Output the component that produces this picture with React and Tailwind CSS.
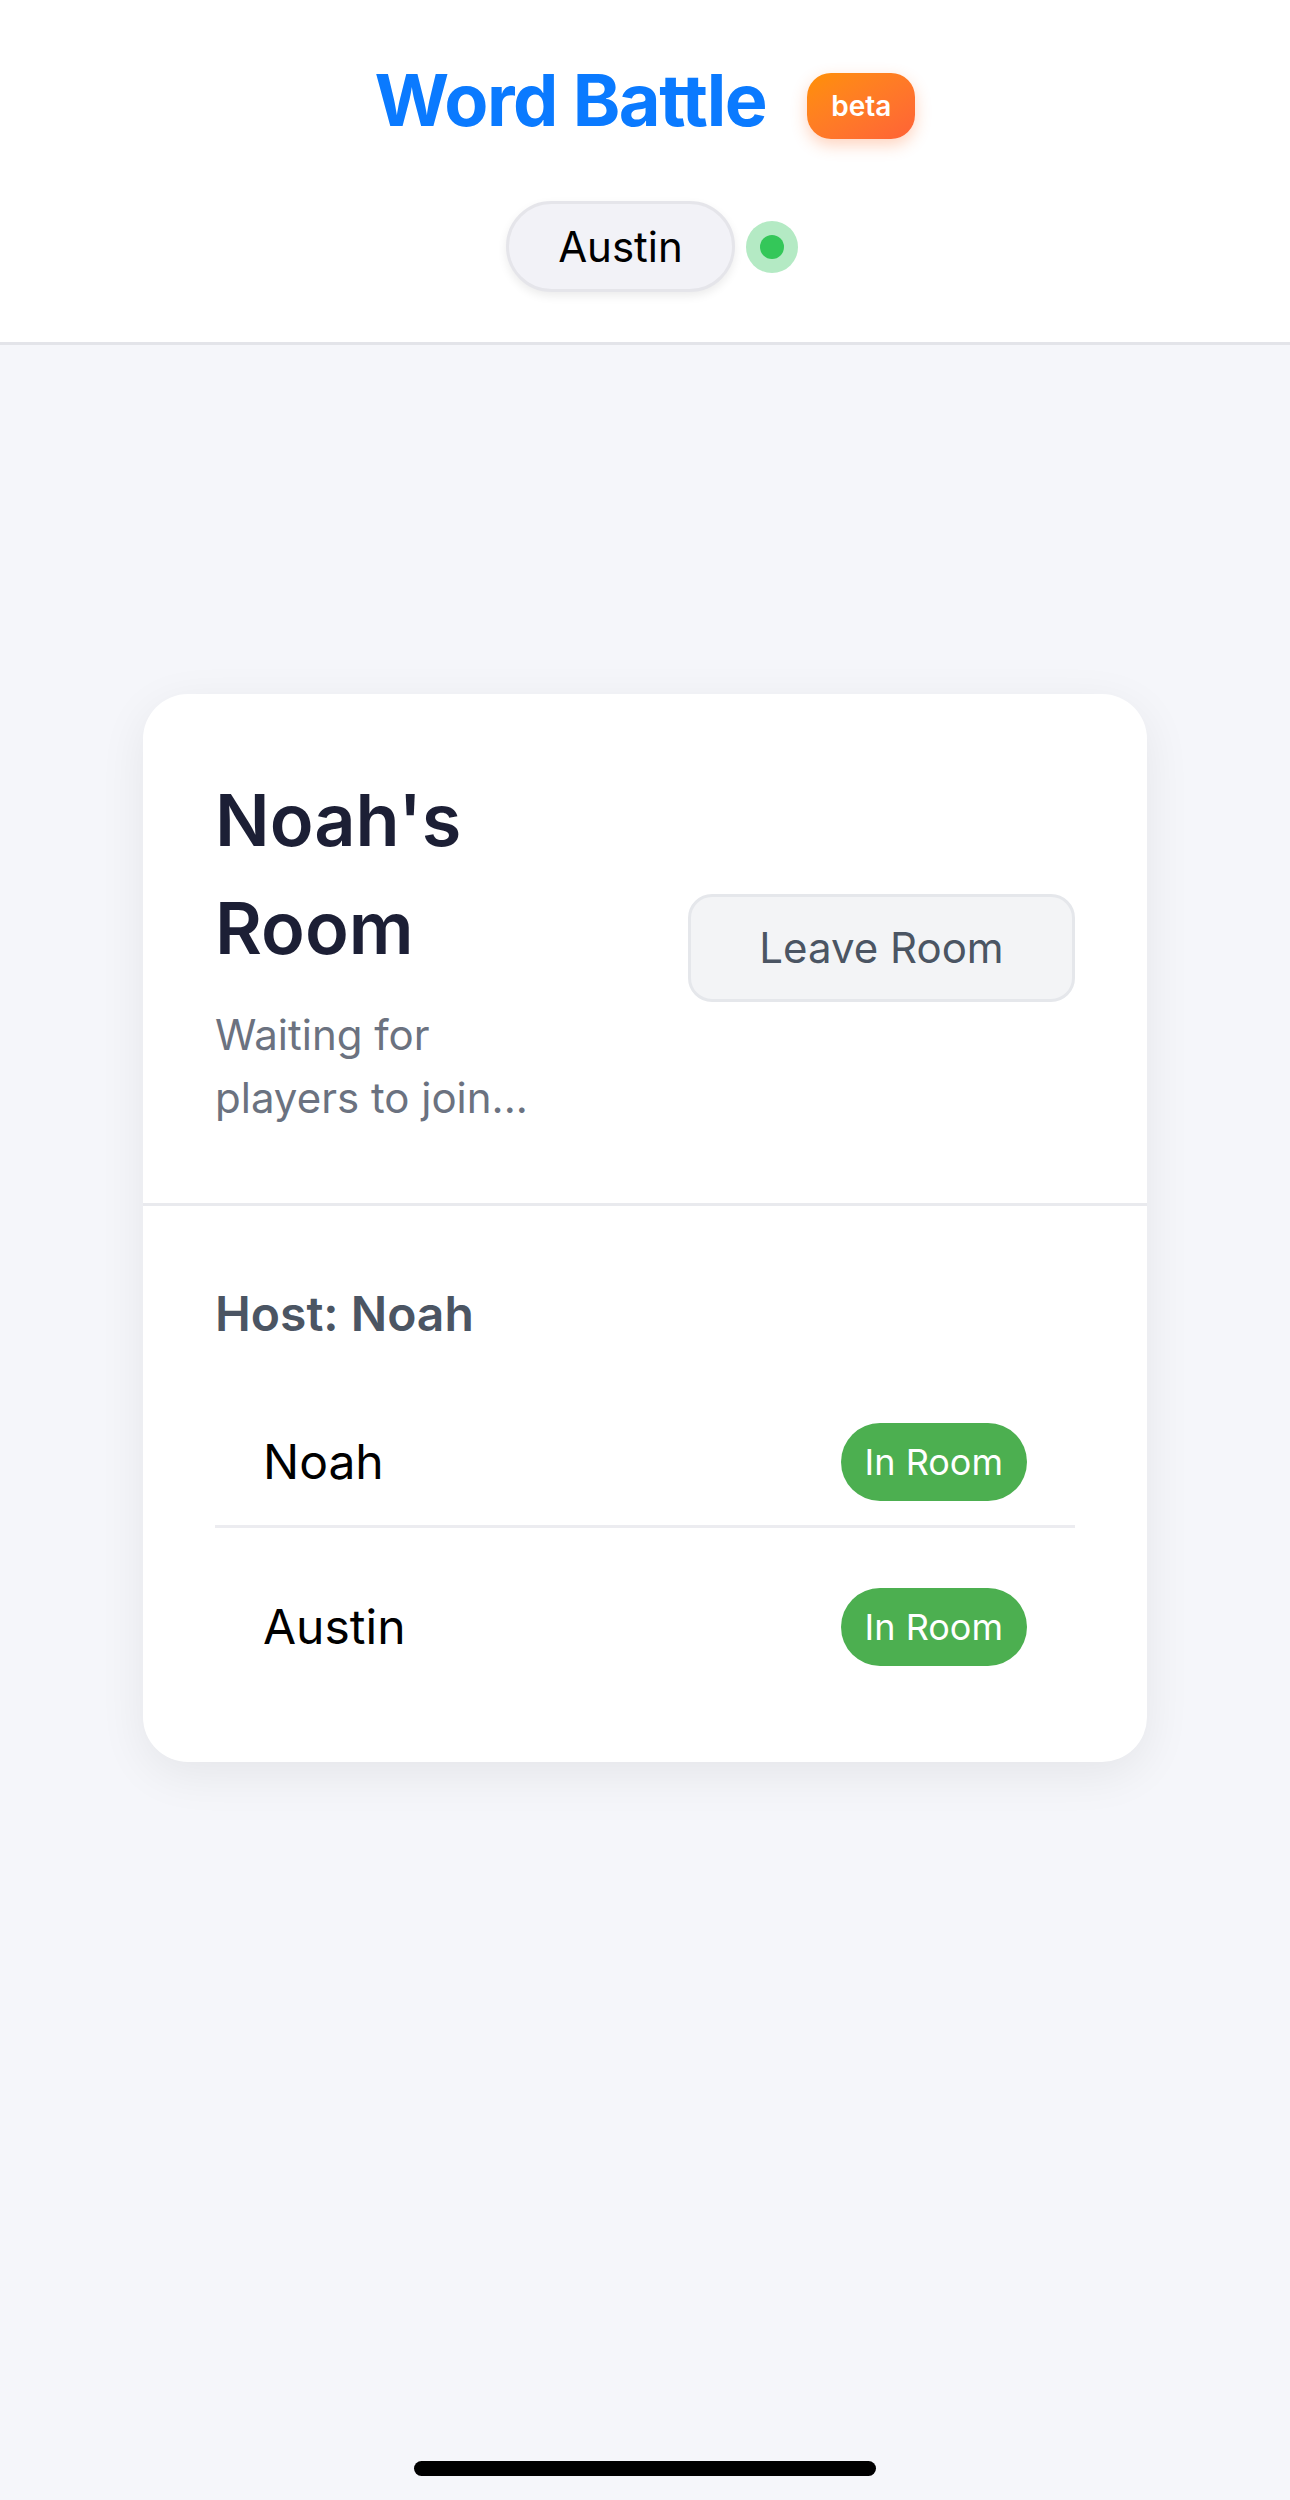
import React from 'react';

const players = ['Noah', 'Austin'];

const App = () => {
    return (
        <div
            className="h-[2500px] bg-[#f5f6fa] flex flex-col"
            style={{ fontFamily: 'Inter, "Noto Sans", sans-serif' }}
        >
            {/* Header */}
            <header className="bg-white border-b-[3px] border-[#e3e4e9] pt-[46px] pb-[50px] flex flex-col items-center">
                <div className="flex items-center gap-[41px]">
                    <h1 className="text-[72px] leading-[108px] font-bold tracking-[-0.02em] text-[#0a7aff]">
                        Word Battle
                    </h1>
                    <span className="mt-[12px] h-[66px] px-[24px] rounded-[24px] bg-linear-to-br from-[#ff9000] to-[#ff6236] text-white text-[28px] font-semibold flex items-center shadow-[0_6px_16px_rgba(255,110,40,0.3)]">
                        beta
                    </span>
                </div>
                <div className="mt-[47px] pl-[14px] flex items-center gap-[11px]">
                    <div className="h-[91px] px-[49px] rounded-full bg-[#f2f2f7] border-[3px] border-[#e5e5ea] text-[42px] text-black flex items-center shadow-[0_4px_10px_rgba(0,0,0,0.08)]">
                        Austin
                    </div>
                    <div className="w-[52px] h-[52px] rounded-full bg-[#b4eac4] flex items-center justify-center">
                        <div className="w-[24px] h-[24px] rounded-full bg-[#34c759]" />
                    </div>
                </div>
            </header>

            {/* Room card */}
            <main className="flex flex-col items-center pt-[349px]">
                <div className="w-[1004px] bg-white rounded-[45px] shadow-[0_12px_48px_rgba(0,0,0,0.07)] overflow-hidden">
                    <div className="px-[72px] pt-[72px] pb-[74px] flex items-center justify-between border-b-[3px] border-[#e9eaee]">
                        <div className="w-[330px]">
                            <h2 className="text-[72px] leading-[108px] font-semibold text-[#1c1f35]">Noah's Room</h2>
                            <p className="mt-[21px] text-[42px] leading-[63px] text-[#6b7280]">
                                Waiting for players to join...
                            </p>
                        </div>
                        <button className="h-[108px] w-[387px] rounded-[24px] bg-[#f3f4f6] border-[3px] border-[#e5e7eb] text-[42px] text-[#4b5563]">
                            Leave Room
                        </button>
                    </div>

                    <div className="p-[72px]">
                        <h3 className="text-[48px] leading-[72px] font-semibold text-[#4b5563]">Host: Noah</h3>
                        <ul className="mt-[49px] flex flex-col gap-[36px]">
                            {players.map((name) => (
                                <li
                                    key={name}
                                    className="px-[48px] py-[24px] flex items-center justify-between border-b-[3px] border-[#ececf0] last:border-b-0"
                                >
                                    <span className="text-[48px] text-black">{name}</span>
                                    <span className="h-[78px] px-[24px] rounded-full bg-[#4caf50] text-white text-[36px] flex items-center">
                                        In Room
                                    </span>
                                </li>
                            ))}
                        </ul>
                    </div>
                </div>
            </main>

            {/* Home indicator */}
            <div className="mt-auto mb-[24px] self-center w-[462px] h-[15px] rounded-full bg-black" />
        </div>
    );
};

export default App;
